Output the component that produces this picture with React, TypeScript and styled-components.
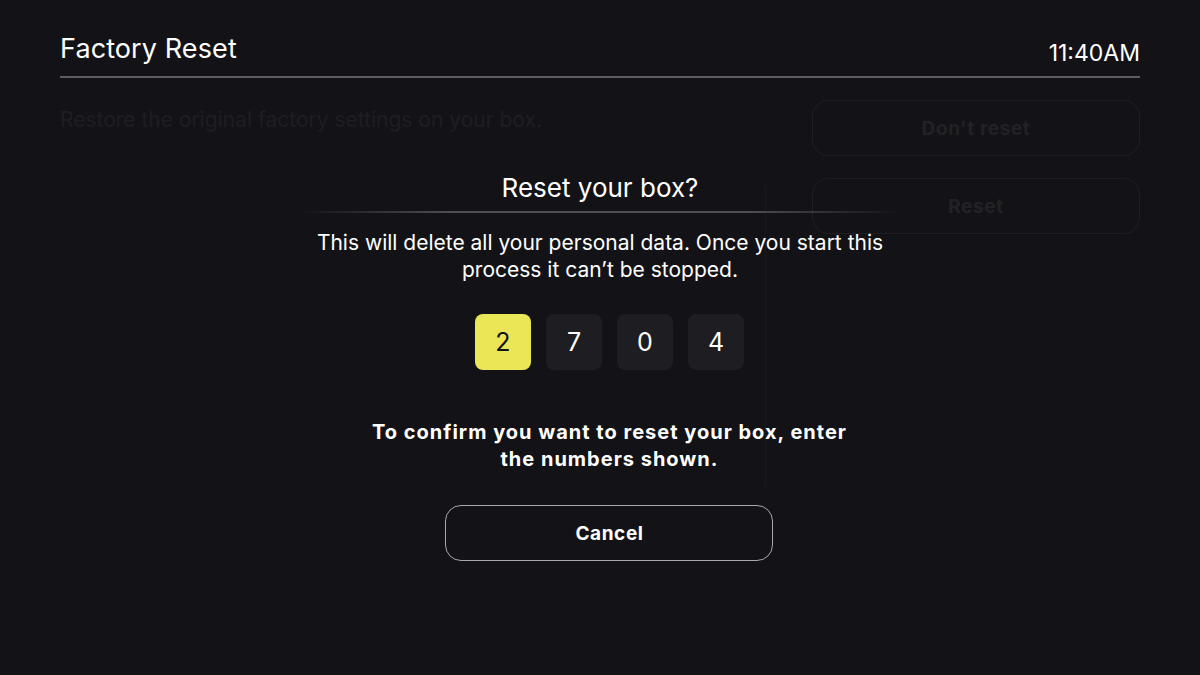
import React from "react";
import styled, { createGlobalStyle } from "styled-components";

const GlobalStyle = createGlobalStyle`
  html, body {
    margin: 0;
    padding: 0;
    background: #131317;
    font-family: Inter, "Noto Sans", "Liberation Sans", sans-serif;
    color: #ffffff;
  }
  * { box-sizing: border-box; }
`;

const digits: string[] = ["2", "7", "0", "4"];

const App = () => {
  return (
    <Root>
      <GlobalStyle />
      <Header>
        <Title>Factory Reset</Title>
        <Clock>11:40AM</Clock>
      </Header>
      <Divider />
      <Content>
        <Description>Restore the original factory settings on your box.</Description>
        <Separator />
        <Actions>
          <GhostButton>Don't reset</GhostButton>
          <GhostButton>Reset</GhostButton>
        </Actions>
      </Content>

      <Overlay>
        <Dialog>
          <DialogTitle>Reset your box?</DialogTitle>
          <FadeLine />
          <Body>
            This will delete all your personal data. Once you start this
            <br />
            process it can’t be stopped.
          </Body>
          <Lower>
            <Digits>
              {digits.map((d, index) => (
                <Digit key={index} active={index === 0}>
                  {d}
                </Digit>
              ))}
            </Digits>
            <Confirm>
              To confirm you want to reset your box, enter
              <br />
              the numbers shown.
            </Confirm>
            <CancelButton>Cancel</CancelButton>
          </Lower>
        </Dialog>
      </Overlay>
    </Root>
  );
};

export default App;

const Root = styled.div`
  position: relative;
  width: 1200px;
  height: 675px;
  overflow: hidden;
  padding: 0 60px;
  background: #131317;
`;

const Header = styled.div`
  display: flex;
  justify-content: space-between;
  align-items: flex-end;
  height: 68px;
  padding-bottom: 4px;
`;

const Title = styled.div`
  font-size: 27px;
  font-weight: 400;
  line-height: 34px;
  letter-spacing: 0.1px;
  margin-bottom: -2px;
`;

const Clock = styled.div`
  font-size: 23px;
  font-weight: 400;
  line-height: 28px;
  margin-bottom: -3px;
`;

const Divider = styled.div`
  height: 2px;
  margin-top: 8px;
  background: #5d5d61;
`;

const Content = styled.div`
  display: flex;
  padding-top: 22px;
`;

const Description = styled.div`
  flex: 1;
  font-size: 21px;
  line-height: 40px;
  color: #1e1e22;
`;

const Separator = styled.div`
  width: 1px;
  height: 300px;
  margin-top: 86px;
  margin-right: 46px;
  background: #1a1a1e;
`;

const Actions = styled.div`
  display: flex;
  flex-direction: column;
  gap: 22px;
  width: 328px;
`;

const GhostButton = styled.div`
  height: 56px;
  display: flex;
  align-items: center;
  justify-content: center;
  border: 1px solid #1f1f23;
  border-radius: 16px;
  font-size: 19px;
  font-weight: 700;
  letter-spacing: 0.6px;
  color: #222226;
`;

const Overlay = styled.div`
  position: absolute;
  inset: 0;
  display: flex;
  justify-content: center;
`;

const Dialog = styled.div`
  display: flex;
  flex-direction: column;
  align-items: center;
  width: 600px;
  padding-top: 171px;
`;

const DialogTitle = styled.div`
  font-size: 26px;
  line-height: 34px;
  font-weight: 400;
`;

const FadeLine = styled.div`
  width: 600px;
  height: 2px;
  margin-top: 6px;
  background: linear-gradient(
    90deg,
    rgba(90, 90, 94, 0) 0%,
    #4e4e52 25%,
    #4e4e52 75%,
    rgba(90, 90, 94, 0) 100%
  );
`;

const Body = styled.div`
  margin-top: 16px;
  font-size: 21px;
  line-height: 27px;
  text-align: center;
  white-space: nowrap;
`;

const Lower = styled.div`
  display: flex;
  flex-direction: column;
  align-items: center;
  padding-left: 19px;
`;

const Digits = styled.div`
  display: flex;
  gap: 15px;
  margin-top: 31px;
`;

const Digit = styled.div<{ active?: boolean }>`
  width: 56px;
  height: 56px;
  border-radius: 8px;
  display: flex;
  align-items: center;
  justify-content: center;
  font-size: 25px;
  background: ${(p) => (p.active ? "#ebe655" : "#1e1e22")};
  color: ${(p) => (p.active ? "#131317" : "#ffffff")};
`;

const Confirm = styled.div`
  margin-top: 49px;
  font-size: 20px;
  line-height: 27px;
  font-weight: 700;
  letter-spacing: 1px;
  text-align: center;
  white-space: nowrap;
`;

const CancelButton = styled.div`
  margin-top: 32px;
  width: 328px;
  height: 56px;
  display: flex;
  align-items: center;
  justify-content: center;
  border: 1px solid #a8a8ac;
  border-radius: 16px;
  font-size: 19px;
  font-weight: 700;
  letter-spacing: 0.6px;
`;
